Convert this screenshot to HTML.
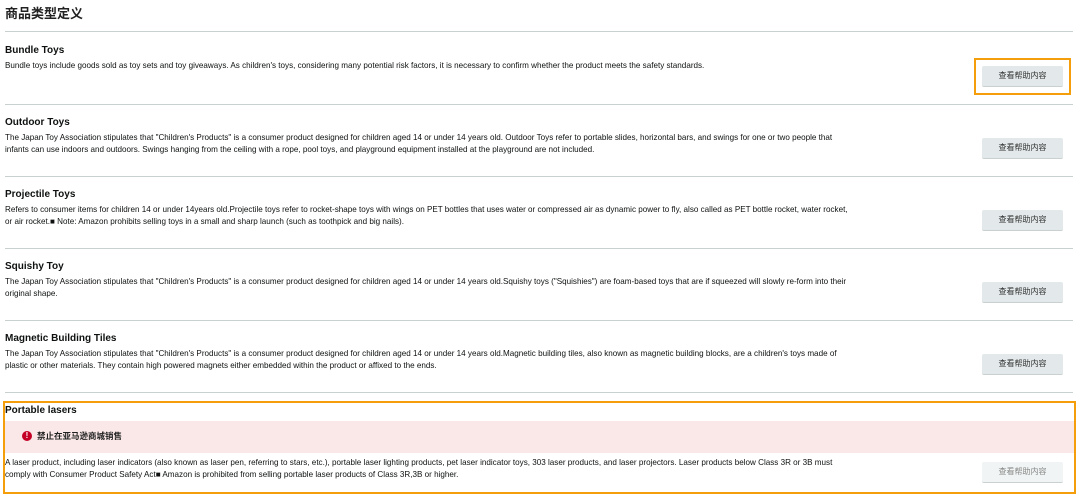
<!DOCTYPE html>
<html><head><meta charset="utf-8"><style>
*{margin:0;padding:0;box-sizing:border-box}
body{width:1080px;height:502px;background:#fff;position:relative;overflow:hidden;font-family:"Liberation Sans","Noto Sans CJK SC",sans-serif;color:#111}
.h1{position:absolute;left:5px;top:3px;font-size:13px;font-weight:bold;font-family:"Noto Sans CJK SC",sans-serif;color:#222}
.line{position:absolute;left:5px;width:1068px;height:1px;background:#c9d0d0}
.t{position:absolute;left:5px;font-size:10px;font-weight:bold;color:#0f1111;white-space:nowrap}
.d{position:absolute;left:5px;font-size:8.1px;line-height:12px;color:#0f1111;white-space:nowrap}
.btn{position:absolute;left:982px;width:81px;height:21px;background:#e3e9ea;border-radius:2px;border-bottom:1px solid #c8d0d0;font-family:"Noto Sans CJK SC",sans-serif;font-size:8px;color:#333;text-align:center;line-height:20px}
.ob{position:absolute;border:2px solid #f59e0b}
</style></head><body>
<div class="h1">商品类型定义</div>
<div class="line" style="top:31px"></div>

<div class="t" style="top:45px">Bundle Toys</div>
<div class="d" style="top:60px">Bundle toys include goods sold as toy sets and toy giveaways. As children's toys, considering many potential risk factors, it is necessary to confirm whether the product meets the safety standards.</div>
<div class="ob" style="left:974px;top:58px;width:97px;height:37px"></div>
<div class="btn" style="top:66px">查看帮助内容</div>
<div class="line" style="top:104px"></div>

<div class="t" style="top:117px">Outdoor Toys</div>
<div class="d" style="top:132px">The Japan Toy Association stipulates that "Children's Products" is a consumer product designed for children aged 14 or under 14 years old. Outdoor Toys refer to portable slides, horizontal bars, and swings for one or two people that<br>infants can use indoors and outdoors. Swings hanging from the ceiling with a rope, pool toys, and playground equipment installed at the playground are not included.</div>
<div class="btn" style="top:138px">查看帮助内容</div>
<div class="line" style="top:176px"></div>

<div class="t" style="top:189px">Projectile Toys</div>
<div class="d" style="top:204px">Refers to consumer items for children 14 or under 14years old.Projectile toys refer to rocket-shape toys with wings on PET bottles that uses water or compressed air as dynamic power to fly, also called as PET bottle rocket, water rocket,<br>or air rocket.■ Note: Amazon prohibits selling toys in a small and sharp launch (such as toothpick and big nails).</div>
<div class="btn" style="top:210px">查看帮助内容</div>
<div class="line" style="top:248px"></div>

<div class="t" style="top:261px">Squishy Toy</div>
<div class="d" style="top:276px">The Japan Toy Association stipulates that "Children's Products" is a consumer product designed for children aged 14 or under 14 years old.Squishy toys ("Squishies") are foam-based toys that are if squeezed will slowly re-form into their<br>original shape.</div>
<div class="btn" style="top:282px">查看帮助内容</div>
<div class="line" style="top:320px"></div>

<div class="t" style="top:333px">Magnetic Building Tiles</div>
<div class="d" style="top:348px">The Japan Toy Association stipulates that "Children's Products" is a consumer product designed for children aged 14 or under 14 years old.Magnetic building tiles, also known as magnetic building blocks, are a children's toys made of<br>plastic or other materials. They contain high powered magnets either embedded within the product or affixed to the ends.</div>
<div class="btn" style="top:354px">查看帮助内容</div>
<div class="line" style="top:392px"></div>

<div class="ob" style="left:3px;top:401px;width:1073px;height:93px"></div>
<div class="t" style="top:405px">Portable lasers</div>
<div style="position:absolute;left:5px;top:421px;width:1069px;height:32px;background:#fae8e8"></div>
<div style="position:absolute;left:22px;top:431px;width:10px;height:10px;border-radius:50%;background:#c40025;color:#fff;font-size:8px;font-weight:bold;text-align:center;line-height:10px">!</div>
<div style="position:absolute;left:37px;top:430px;font-size:8.5px;font-weight:bold;font-family:'Noto Sans CJK SC',sans-serif;color:#222">禁止在亚马逊商城销售</div>
<div class="d" style="top:457px">A laser product, including laser indicators (also known as laser pen, referring to stars, etc.), portable laser lighting products, pet laser indicator toys, 303 laser products, and laser projectors. Laser products below Class 3R or 3B must<br>comply with Consumer Product Safety Act■ Amazon is prohibited from selling portable laser products of Class 3R,3B or higher.</div>
<div class="btn" style="top:462px;background:#f0f4f4;color:#888">查看帮助内容</div>
</body></html>
